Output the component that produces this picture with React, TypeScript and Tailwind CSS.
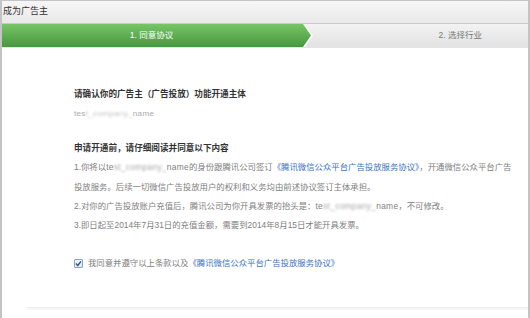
import React from 'react';

const font = "font-['Liberation_Sans','Noto_Sans_CJK_SC',sans-serif]";

function Name({ head, blur, tail }: { head: string; blur: string; tail: string }) {
  return (
    <span className="tracking-[0.3px]">
      {head}
      <span className="blur-[1.2px] opacity-70">{blur}</span>
      {tail}
    </span>
  );
}

export default function App() {
  return (
    <div
      className={`${font} w-[530px] h-[318px] overflow-hidden bg-white border-t border-x-2 border-[#c4c4c4] flex flex-col text-[8.4px]`}
    >
      {/* title bar */}
      <div className="h-[23px] shrink-0 flex items-center pl-[1px] bg-gradient-to-b from-[#f6f6f6] to-[#e9e9e9] border-b border-[#c9c9c9] text-[#333] text-[9px]">
        成为广告主
      </div>

      {/* steps */}
      <div className="h-[24px] shrink-0 flex bg-gradient-to-b from-[#f3f3f3] to-[#e2e2e2] border-b border-[#e4e4e4] text-[8.5px]">
        <div className="w-[312px] h-full bg-white [clip-path:polygon(0_0,303px_0,311px_50%,303px_100%,0_100%)]">
          <div className="w-[309px] h-full flex items-center justify-center pr-[10px] text-white bg-gradient-to-b from-[#76c566] to-[#479740] [clip-path:polygon(0_0,301px_0,309px_50%,301px_100%,0_100%)]">
            1. 同意协议
          </div>
        </div>
        <div className="flex-1 flex items-center justify-end pr-[46px] text-[#777]">2. 选择行业</div>
      </div>

      {/* content */}
      <div className="pl-[72px] pt-[37px] text-[#808080] leading-[19.4px] whitespace-nowrap">
        <div className="font-bold text-[#333] text-[8.6px]">请确认你的广告主（广告投放）功能开通主体</div>
        <div className="text-[#aaa] text-[8.1px]">
          <Name head="tes" blur="t_company_" tail="name" />
        </div>

        <div className="mt-[15px] font-bold text-[#333] text-[8.6px]">申请开通前，请仔细阅读并同意以下内容</div>
        <div>
          1.你将以<Name head="te" blur="st_company_" tail="name" />的身份跟腾讯公司签订
          <span className="text-[#3b73c4]">《腾讯微信公众平台广告投放服务协议》</span>，开通微信公众平台广告
        </div>
        <div>投放服务。后续一切微信广告投放用户的权利和义务均由前述协议签订主体承担。</div>
        <div>
          2.对你的广告投放账户充值后，腾讯公司为你开具发票的抬头是：
          <Name head="te" blur="st_company_" tail="name" />，不可修改。
        </div>
        <div>3.即日起至2014年7月31日的充值金额，需要到2014年8月15日才能开具发票。</div>

        <div className="mt-[18px] flex items-center gap-[5px]">
          <span className="w-[9px] h-[9px] flex items-center justify-center border border-[#8aa3c4] bg-gradient-to-b from-[#f4f8fd] to-[#dce6f3] rounded-[1px]">
            <svg width="7" height="7" viewBox="0 0 7 7">
              <path d="M1 3.6 L2.8 5.4 L6 1.4" fill="none" stroke="#2f4f7a" strokeWidth="1.4" />
            </svg>
          </span>
          <span>
            我同意并遵守以上条款以及
            <span className="text-[#3b73c4]">《腾讯微信公众平台广告投放服务协议》</span>
          </span>
        </div>
      </div>

      {/* bottom separator */}
      <div className="mt-auto mb-[8px] ml-[25px] h-[3px] border-t border-[#ececec] bg-[#f7f7f7]" />
    </div>
  );
}
